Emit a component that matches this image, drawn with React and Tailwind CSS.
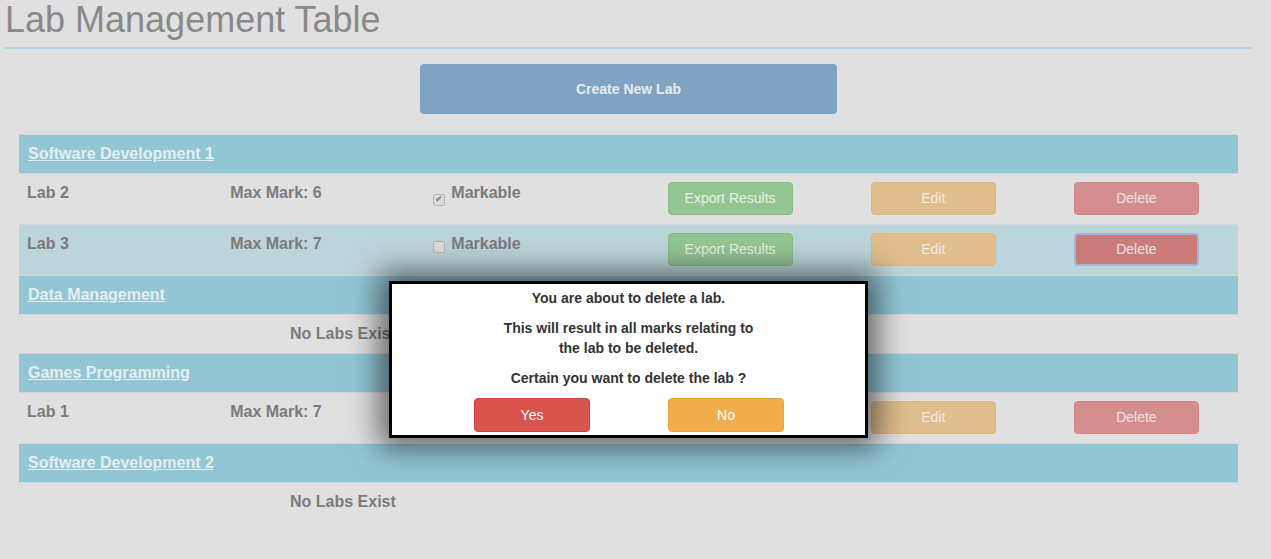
import React from 'react';

// Lab table with a delete-confirmation dialog open over it.
const modules = [
  {
    name: 'Software Development 1',
    labs: [
      { name: 'Lab 2', max: 6, markable: true },
      { name: 'Lab 3', max: 7, markable: false, active: true },
    ],
  },
  { name: 'Data Management', labs: [] },
  { name: 'Games Programming', labs: [{ name: 'Lab 1', max: 7, markable: true }] },
  { name: 'Software Development 2', labs: [] },
];

const Checkbox = ({ checked }) => (
  <span className="inline-flex w-[12px] h-[12px] items-center justify-center rounded-[2px] border border-[#b5b5b5] bg-[#dcdcdc] text-[9px] leading-none text-[#8a8a8a] mr-[6px]">
    {checked ? '✔' : ''}
  </span>
);

const LabRow = ({ lab }) => (
  <div
    className={`grid grid-cols-6 h-[51px] border-t border-[#d2d6d8] ${
      lab.active ? 'bg-[#bcd5db]' : ''
    }`}
  >
    <div className="px-[8px] pt-[8px] text-[16px] leading-[22px] font-bold text-[#7b7b7b]">{lab.name}</div>
    <div className="px-[8px] pt-[8px] text-[16px] leading-[22px] font-bold text-[#7b7b7b]">Max Mark: {lab.max}</div>
    <div className="px-[8px] pt-[8px] text-[16px] leading-[22px] font-bold text-[#7b7b7b] flex items-start">
      <span className="pt-[4px]">
        <Checkbox checked={lab.markable} />
      </span>
      Markable
    </div>
    <div className="flex justify-center pt-[8px]">
      <button className="w-[125px] h-[33px] rounded-[4px] bg-[#93c592] border border-[#88bd87] text-[14px] text-[#e8f0e6]">
        Export Results
      </button>
    </div>
    <div className="flex justify-center pt-[8px]">
      <button className="w-[125px] h-[33px] rounded-[4px] bg-[#e0bd8c] border border-[#dcb683] text-[14px] text-[#f1ebe2]">
        Edit
      </button>
    </div>
    <div className="flex justify-center pt-[8px]">
      <button
        className={`w-[125px] h-[33px] rounded-[4px] text-[14px] text-[#f0e4e4] ${
          lab.active ? 'bg-[#cb7b7a] border-2 border-[#9fb8d8]' : 'bg-[#d58e8e] border border-[#d18585]'
        }`}
      >
        Delete
      </button>
    </div>
  </div>
);

const App = () => {
  return (
    <div
      className="relative min-h-[559px] w-[1271px] bg-[#e0e0e0] overflow-hidden"
      style={{ fontFamily: '"Liberation Sans", Arial, sans-serif' }}
    >
      {/* Header */}
      <div className="ml-[4px] w-[1249px] border-b-2 border-[#bcd6df] pb-[7px]">
        <h1 className="pl-[1px] text-[36px] leading-[40px] text-[#898989] font-normal">Lab Management Table</h1>
      </div>

      <div className="ml-[19px] w-[1219px]">
        <div className="flex justify-center pt-[15px] pb-[20px]">
          <button className="w-[417px] h-[50px] rounded-[4px] bg-[#7fa3c1] text-[14px] font-bold text-[#e6ebef]">
            Create New Lab
          </button>
        </div>

        {/* Table */}
        <div>
          {modules.map((mod) => (
            <div key={mod.name}>
              <div className="h-[39px] bg-[#93c6d5] border-t border-[#d3d6d8] flex items-center px-[9px]">
                <span className="text-[16px] font-bold underline text-[#e6edef]">{mod.name}</span>
              </div>
              {mod.labs.length === 0 ? (
                <div className="h-[39px] border-t border-[#d2d6d8] flex items-center pl-[271px] text-[16px] font-bold text-[#7b7b7b]">
                  No Labs Exist
                </div>
              ) : (
                mod.labs.map((lab) => <LabRow key={lab.name} lab={lab} />)
              )}
            </div>
          ))}
        </div>
      </div>

      {/* Confirm dialog */}
      <div className="absolute left-[389px] top-[281px] w-[479px] h-[157px] bg-white border-[3px] border-black shadow-[0_0_28px_10px_rgba(0,0,0,0.55)] pt-[4px] text-center text-[14px] leading-[20px] font-bold text-[#333]">
        <p className="mb-[10px]">You are about to delete a lab.</p>
        <p className="mb-[10px]">
          This will result in all marks relating to
          <br />
          the lab to be deleted.
        </p>
        <p className="mb-[10px]">Certain you want to delete the lab ?</p>
        <div className="flex justify-center gap-[78px] pl-[1px]">
          <button className="w-[116px] h-[34px] rounded-[4px] bg-[#d9534f] border border-[#d43f3a] text-white font-normal">
            Yes
          </button>
          <button className="w-[116px] h-[34px] rounded-[4px] bg-[#f0ad4e] border border-[#eea236] text-white font-normal">
            No
          </button>
        </div>
      </div>
    </div>
  );
};

export default App;
